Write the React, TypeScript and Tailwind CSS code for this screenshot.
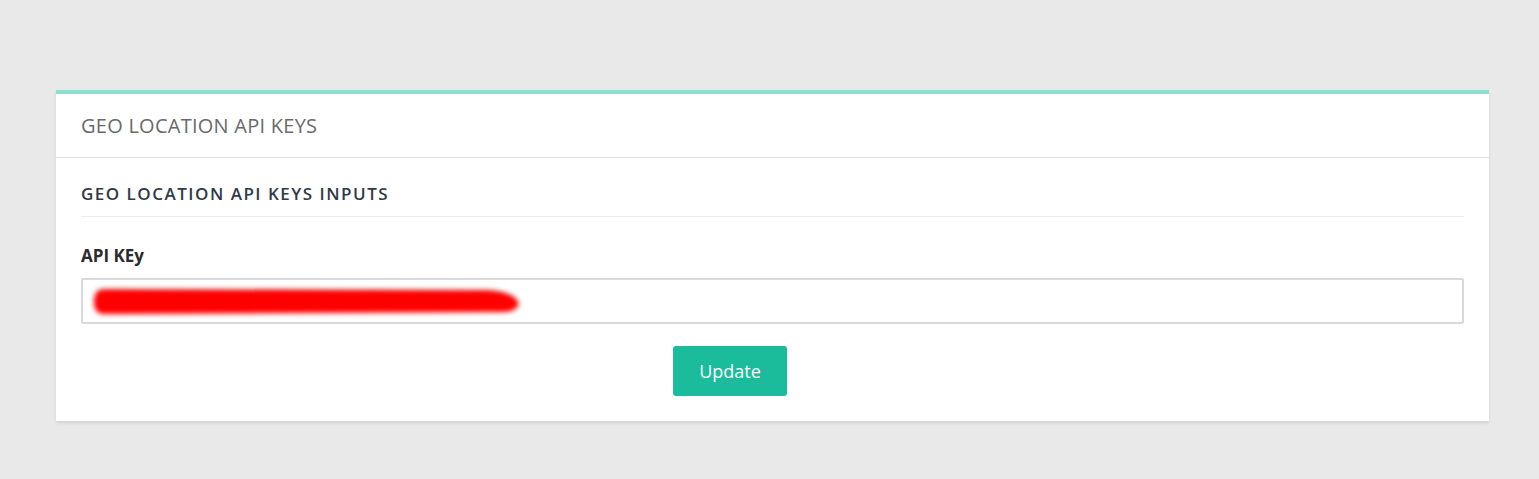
export default function App() {
  return (
    <div className="min-h-screen bg-[#e9e9e9] pl-[56px] pr-[50px] pt-[90px] pb-[57px] [font-family:'Open_Sans',sans-serif]">
      <div className="border-t-4 border-[#8adfcf] bg-white shadow-[0_2px_3px_rgba(0,0,0,0.1)]">
        <div className="flex h-[64px] items-center border-b border-[#dedede] px-[25px]">
          <h2 className="text-[20px] tracking-[0.25px] text-[#6a6a6a]">GEO LOCATION API KEYS</h2>
        </div>

        <div className="px-[25px] pt-[23px] pb-[25px]">
          <h3 className="border-b border-[#ececec] pb-[9px] text-[17px] font-semibold tracking-[1.5px] text-[#2f3a46]">
            GEO LOCATION API KEYS INPUTS
          </h3>

          <label className="mt-[26px] block text-[17px] font-bold text-[#2b2b2b]">API KEy</label>

          <div className="relative mt-[10px] h-[46px] rounded-[2px] border-2 border-[#d9d9d9] bg-white">
            <svg
              className="absolute left-[1px] top-[3px]"
              width="445"
              height="38"
              viewBox="0 0 445 38"
            >
              <defs>
                <filter id="blur" x="-10%" y="-50%" width="120%" height="200%">
                  <feGaussianBlur stdDeviation="2.4" />
                </filter>
              </defs>
              <path
                d="M20 6 L404 7 C420 8 430 12 434 18 C436 25 430 29 416 29 L20 31 C12 31 10 25 10 19 C10 12 12 6 20 6 Z"
                fill="#ff0000"
                filter="url(#blur)"
              />
            </svg>
          </div>

          <div className="mt-[22px] ml-[592px]">
            <button className="h-[50px] w-[114px] rounded-[3px] bg-[#1abc9c] text-[18px] text-white">
              Update
            </button>
          </div>
        </div>
      </div>
    </div>
  );
}
